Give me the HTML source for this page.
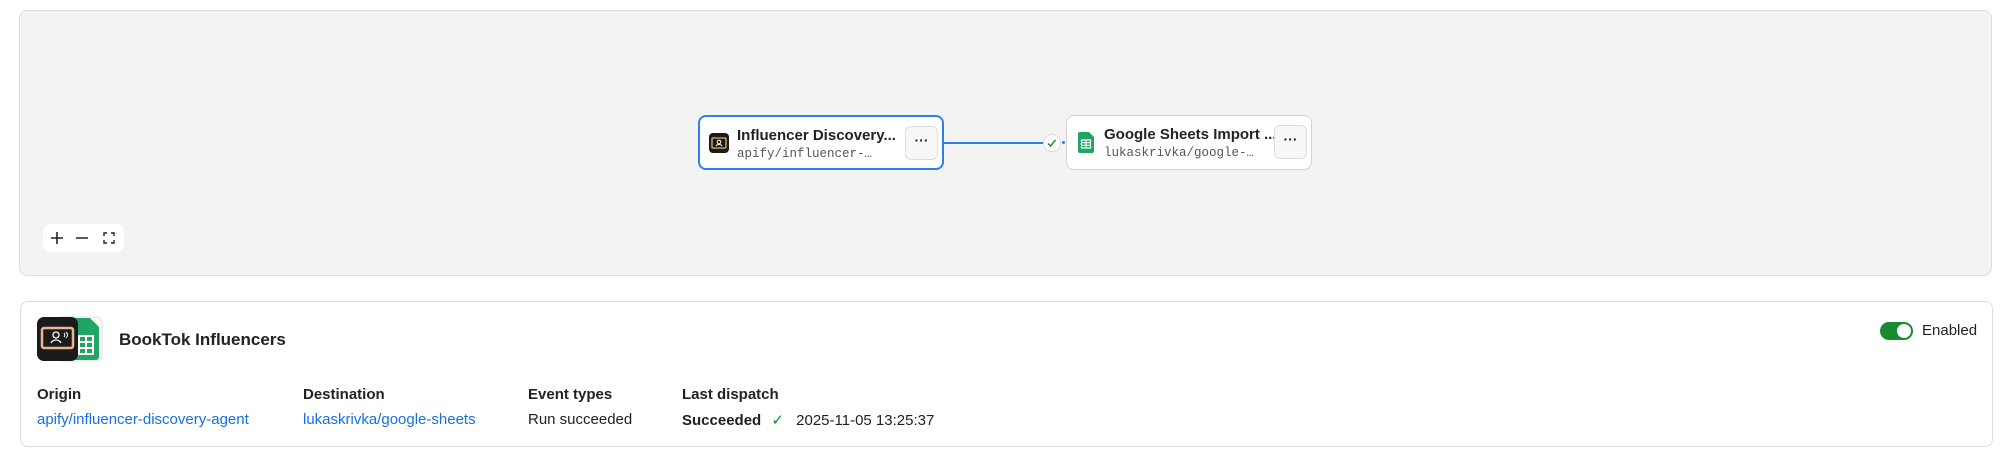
<!DOCTYPE html>
<html><head><meta charset="utf-8"><style>
*{box-sizing:border-box;margin:0;padding:0}
body{width:2000px;height:465px;background:#fff;font-family:"Liberation Sans",sans-serif;color:#1f1f1f;position:relative;overflow:hidden}
.abs{position:absolute}
.canvas{left:19px;top:10px;width:1973px;height:266px;background:#f3f3f3;border:1px solid #dedede;border-radius:8px}
.node{top:115px;width:246px;height:55px;background:#fff;border:1.5px solid #d4d4d4;border-radius:8px}
.node.sel{border:2px solid #2f7ef0}
.node .t{position:absolute;left:37px;top:10px;font-size:15px;font-weight:bold;white-space:nowrap;color:#222}
.node .s{position:absolute;left:37px;top:30px;font-family:"Liberation Mono",monospace;font-size:12.5px;color:#555;white-space:nowrap}
.menu{position:absolute;right:4px;top:9px;width:33px;height:34px;border:1px solid #ddd;border-radius:6px;background:#f7f7f7;text-align:center;font-weight:bold;font-size:14px;line-height:26px;color:#222}
.card{left:20px;top:301px;width:1973px;height:146px;border:1px solid #dedede;border-radius:8px;background:#fff}
.lbl{font-size:15px;font-weight:bold;top:386px;color:#222}
.val{font-size:15px;top:411px;white-space:nowrap}
.link{color:#1670e8}
</style></head><body>
<div class="abs canvas"></div>
<div class="abs" style="left:944px;top:142px;width:100px;height:2px;background:#2f7ef0"></div>
<div class="abs" style="left:1043px;top:134px;width:18px;height:18px;border-radius:50%;background:#fff;border:1px solid #ddd"></div>
<svg class="abs" style="left:1046px;top:137px" width="12" height="12" viewBox="0 0 12 12"><path d="M2 6.5l2.5 2.5 5-6" fill="none" stroke="#1f8a2e" stroke-width="1.5"/></svg>
<div class="abs" style="left:1062px;top:141px;width:3px;height:3px;border-radius:50%;background:#2f7ef0"></div>

<div class="abs node sel" style="left:698px">
 <svg style="position:absolute;left:9px;top:16px" width="20" height="20" viewBox="0 0 20 20"><rect width="20" height="20" rx="4" fill="#1b1b1b"/><rect x="3" y="5" width="14" height="10" rx="1" fill="none" stroke="#e9b45a" stroke-width="1.3"/><circle cx="10" cy="9" r="1.8" fill="none" stroke="#fff" stroke-width="1"/><path d="M7 13c1-2 5-2 6 0" fill="none" stroke="#fff" stroke-width="1"/></svg>
 <div class="t">Influencer Discovery...</div>
 <div class="s">apify/influencer-…</div>
 <div class="menu">···</div>
</div>
<div class="abs node" style="left:1066px">
 <svg style="position:absolute;left:11px;top:16px" width="16" height="21" viewBox="0 0 16 21"><path d="M0 2a2 2 0 012-2h9l5 5v14a2 2 0 01-2 2H2a2 2 0 01-2-2z" fill="#21a464"/><rect x="3.5" y="8" width="9" height="8" fill="none" stroke="#fff" stroke-width="1.2"/><path d="M3.5 10.7h9M3.5 13.3h9M8 8v8" stroke="#fff" stroke-width="1.2"/></svg>
 <div class="t">Google Sheets Import ...</div>
 <div class="s">lukaskrivka/google-…</div>
 <div class="menu">···</div>
</div>

<div class="abs" style="left:43px;top:224px;width:81px;height:28px;background:#fff;border-radius:8px"></div>
<svg class="abs" style="left:49px;top:230px" width="72" height="16" viewBox="0 0 72 16"><path d="M8 2v12M2 8h12M27 8h12" stroke="#222" stroke-width="1.6"/><path d="M55 6V3h3M62 3h3v3M65 10v3h-3M58 13h-3v-3" fill="none" stroke="#222" stroke-width="1.4"/></svg>

<div class="abs card"></div>
<svg class="abs" style="left:37px;top:316px" width="66" height="46" viewBox="0 0 66 46"><rect x="20" y="1" width="45" height="44" rx="6" fill="#fff" stroke="#ddd"/><path d="M22 5a3 3 0 013-3h28l9 9v30a3 3 0 01-3 3H25a3 3 0 01-3-3z" fill="#21a464"/><rect x="42" y="20" width="14" height="18" fill="none" stroke="#fff" stroke-width="2"/><path d="M42 26h14M42 32h14M49 20v18" stroke="#fff" stroke-width="2"/><rect x="0" y="1" width="41" height="44" rx="7" fill="#1b1b1b"/><rect x="5" y="12" width="31" height="20" rx="2" fill="none" stroke="#e7a8c7" stroke-width="2.5"/><rect x="5" y="12" width="31" height="20" rx="2" fill="none" stroke="#f0c15a" stroke-width="1.3"/><circle cx="19" cy="19" r="3" fill="none" stroke="#fff" stroke-width="1.3"/><path d="M14 27c2-4 8-4 10 0" fill="none" stroke="#fff" stroke-width="1.3"/><path d="M27 17c1 1 1 3 0 4M29 16c2 2 2 4 0 6" fill="none" stroke="#fff" stroke-width="1"/></svg>
<div class="abs" style="left:119px;top:330px;font-size:17px;font-weight:bold;color:#222">BookTok Influencers</div>
<div class="abs" style="left:1880px;top:322px;width:33px;height:18px;border-radius:9px;background:#1a8a2e"></div>
<div class="abs" style="left:1897px;top:324px;width:14px;height:14px;border-radius:50%;background:#fff"></div>
<div class="abs" style="left:1922px;top:322px;font-size:15px">Enabled</div>

<div class="abs lbl" style="left:37px">Origin</div>
<div class="abs lbl" style="left:303px">Destination</div>
<div class="abs lbl" style="left:528px">Event types</div>
<div class="abs lbl" style="left:682px">Last dispatch</div>
<div class="abs val link" style="left:37px">apify/influencer-discovery-agent</div>
<div class="abs val link" style="left:303px">lukaskrivka/google-sheets</div>
<div class="abs val" style="left:528px">Run succeeded</div>
<div class="abs val" style="left:682px"><b>Succeeded</b> <span style="color:#1a8a2e;margin:0 8px 0 6px">✓</span> 2025-11-05 13:25:37</div>
</body></html>
